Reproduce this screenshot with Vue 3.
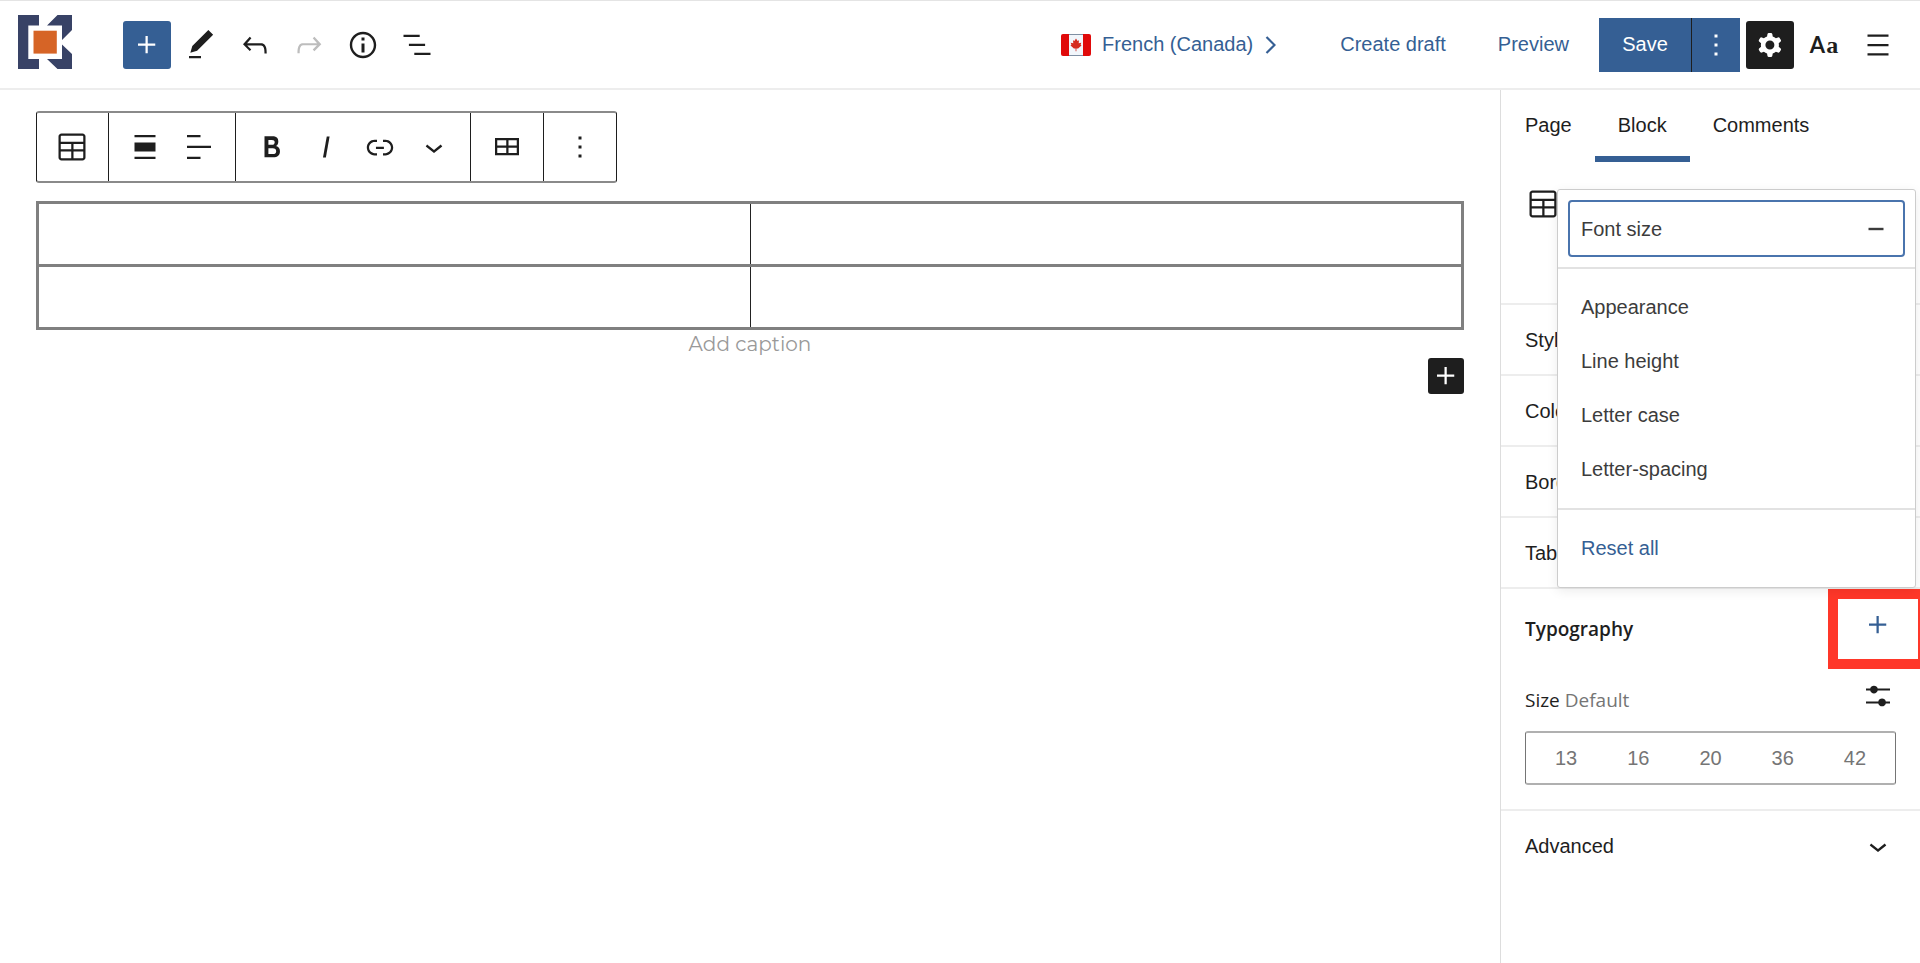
<template>
  <div class="editor">
    <header class="header">
      <div class="header-left">
        <a href="#" class="logo" aria-label="Dashboard">
          <svg width="54" height="54" viewBox="0 0 54 54">
            <path fill="#384266" d="M0 0h21v10.5H10.3V44H21v10H0zM39.5 0H54v15L44 25V10.5H29zM44 29.5l10 9.5v15H39.5L29 44h15z" />
            <path fill="#d66426" d="M15.5 15.7h23.3v22.9H15.5z" />
          </svg>
        </a>
        <button class="icon-btn primary" aria-label="Add block">
          <svg viewBox="0 0 24 24"><path :d="icons.plus" /></svg>
        </button>
        <button
          v-for="tool in headerTools"
          :key="tool.icon"
          class="icon-btn"
          :aria-label="tool.label"
          :disabled="tool.disabled"
        >
          <svg viewBox="0 0 24 24"><path :d="icons[tool.icon]" /></svg>
        </button>
      </div>

      <div class="header-right">
        <a href="#" class="language">
          <svg class="flag" width="30" height="22" viewBox="0 0 30 22">
            <rect width="30" height="22" rx="2" fill="#e00a0a" />
            <path fill="#f2f6fb" d="M8 0h14v22H8z" />
            <path stroke="#7f8fa3" d="M8 .5h14M8 21.5h14" />
            <path fill="#d52b1e" d="M15 4.5l1.6 2.4 1.4-.6-.3 3 2.6-.6-.7 2 .9.8-3.4 2.9h-1.7v2.8h-.8v-2.8h-1.7l-3.4-2.9.9-.8-.7-2 2.6.6-.3-3 1.4.6z" />
          </svg>
          <span>French (Canada)</span>
          <svg class="arrow" width="11" height="18" viewBox="0 0 11 18">
            <path fill="none" stroke="#355f94" stroke-width="2.2" d="M1.5 1l8 8-8 8" />
          </svg>
        </a>
        <button class="text-btn draft">Create draft</button>
        <button class="text-btn preview">Preview</button>
        <div class="save-group">
          <button class="save">Save</button>
          <button class="save-more" aria-label="More save options">
            <svg viewBox="0 0 24 24"><path :d="icons.more" /></svg>
          </button>
        </div>
        <button class="icon-btn dark" aria-label="Settings" @click="showSidebar = !showSidebar">
          <svg viewBox="0 0 24 24"><path fill-rule="evenodd" :d="icons.cog" /></svg>
        </button>
        <button class="icon-btn styles" aria-label="Typography styles"><b>A</b><i>a</i></button>
        <button class="icon-btn" aria-label="Options">
          <svg viewBox="0 0 24 24"><path :d="icons.menu" /></svg>
        </button>
      </div>
    </header>

    <div class="body">
      <main class="canvas">
        <div class="toolbar">
          <div v-for="(group, i) in toolbar" :key="i" class="toolbar-group">
            <button v-for="item in group" :key="item" :aria-label="item">
              <svg viewBox="0 0 24 24"><path :d="icons[item]" /></svg>
            </button>
          </div>
        </div>

        <figure class="table-block">
          <table>
            <tbody>
              <tr v-for="row in 2" :key="row">
                <td v-for="col in 2" :key="col" contenteditable="true"></td>
              </tr>
            </tbody>
          </table>
          <figcaption>Add caption</figcaption>
        </figure>
        <button class="inserter" aria-label="Add block">
          <svg viewBox="0 0 24 24"><path :d="icons.plus" /></svg>
        </button>
      </main>

      <aside v-if="showSidebar" class="sidebar">
        <nav class="tabs">
          <button
            v-for="tab in tabs"
            :key="tab"
            :class="{ 'active': tab === activeTab }"
            @click="activeTab = tab"
          >{{ tab }}</button>
        </nav>

        <div class="block-card">
          <svg viewBox="0 0 24 24"><path :d="icons.table" /></svg>
        </div>

        <button v-for="panel in panels" :key="panel" class="panel-row">{{ panel }}</button>

        <section class="typography">
          <div class="typography-head">
            <h2>Typography</h2>
            <button class="icon-btn add-option" aria-label="Typography options" @click="showMenu = !showMenu">
              <svg viewBox="0 0 24 24"><path :d="icons.plus" /></svg>
            </button>
            <span class="highlight"></span>
          </div>
          <div class="size-head">
            <span>Size <em>Default</em></span>
            <button class="icon-btn" aria-label="Set custom size">
              <svg viewBox="0 0 24 24"><path :d="icons.sliders" /></svg>
            </button>
          </div>
          <div class="sizes">
            <button v-for="size in sizes" :key="size" @click="fontSize = size">{{ size }}</button>
          </div>
        </section>

        <button class="panel-row advanced">
          Advanced
          <svg viewBox="0 0 24 24"><path :d="icons.chevron" /></svg>
        </button>

        <div v-if="showMenu" class="menu">
          <div class="menu-group first">
            <button class="selected">
              Font size
              <svg viewBox="0 0 24 24"><path d="M7 11.2h10v1.6H7z" /></svg>
            </button>
          </div>
          <div class="menu-group">
            <button v-for="option in options" :key="option">{{ option }}</button>
          </div>
          <div class="menu-group">
            <button class="reset">Reset all</button>
          </div>
        </div>
      </aside>
    </div>
  </div>
</template>

<script setup>
import { ref } from 'vue'

const showSidebar = ref(true)
const showMenu = ref(true)
const activeTab = ref('Block')
const fontSize = ref(null)

const tabs = ['Page', 'Block', 'Comments']
const panels = ['Styles', 'Color', 'Border', 'Table']
const options = ['Appearance', 'Line height', 'Letter case', 'Letter-spacing']
const sizes = [13, 16, 20, 36, 42]

const headerTools = [
  { icon: 'edit', label: 'Tools' },
  { icon: 'undo', label: 'Undo' },
  { icon: 'redo', label: 'Redo', disabled: true },
  { icon: 'info', label: 'Details' },
  { icon: 'list', label: 'List view' }
]

const toolbar = [
  ['table'],
  ['align', 'alignText'],
  ['bold', 'italic', 'link', 'chevron'],
  ['editTable'],
  ['more']
]

const icons = {
  plus: 'M11 12.5V17.5H12.5V12.5H17.5V11H12.5V6H11V11H6V12.5H11Z',
  edit: 'M20.1 5.1L16.9 2 6.2 12.7l-1.3 4.4 4.5-1.3L20.1 5.1zM4 20.8h8v-1.5H4v1.5z',
  undo: 'M18.3 11.7c-.6-.6-1.4-.9-2.3-.9H6.7l2.9-3.3-1.1-1-4.5 5L8.5 16l1-1-2.7-2.7H16c.5 0 .9.2 1.3.5 1 1 1 3.4 1 4.5v.3h1.5v-.2c0-1.5 0-4.3-1.5-5.7z',
  redo: 'M15.6 6.5l-1.1 1 2.9 3.3H8c-.9 0-1.7.3-2.3.9-1.4 1.5-1.4 4.2-1.4 5.6v.2h1.5v-.3c0-1.1 0-3.5 1-4.5.3-.3.7-.5 1.3-.5h9.2L14.5 15l1.1 1.1 4.6-4.6-4.6-5z',
  info: 'M12 3.2c-4.8 0-8.8 3.9-8.8 8.8 0 4.8 3.9 8.8 8.8 8.8 4.8 0 8.8-3.9 8.8-8.8 0-4.8-4-8.8-8.8-8.8zm0 16c-4 0-7.2-3.3-7.2-7.2C4.8 8 8 4.8 12 4.8s7.2 3.3 7.2 7.2c0 4-3.2 7.2-7.2 7.2zM11 17h2v-6h-2v6zm0-8h2V7h-2v2z',
  list: 'M13.8 5.2H3v1.5h10.8V5.2zm-3.6 12v1.5H21v-1.5H10.2zm7.2-6H6.6v1.5h10.8v-1.5z',
  more: 'M13 19h-2v-2h2v2zm0-6h-2v-2h2v2zm0-6h-2V5h2v2z',
  menu: 'M5 5v1.5h14V5H5zm0 7.8h14v-1.5H5v1.5zM5 19h14v-1.5H5V19z',
  cog: 'M10.289 4.836A1 1 0 0111.275 4h1.306a1 1 0 01.987.836l.244 1.466c.787.26 1.503.679 2.108 1.218l1.393-.522a1 1 0 011.216.437l.653 1.13a1 1 0 01-.23 1.273l-1.148.944a6.025 6.025 0 010 2.435l1.149.946a1 1 0 01.23 1.272l-.653 1.13a1 1 0 01-1.216.437l-1.394-.522c-.605.54-1.32.958-2.108 1.218l-.244 1.466a1 1 0 01-.987.836h-1.306a1 1 0 01-.986-.836l-.244-1.466a5.995 5.995 0 01-2.108-1.218l-1.394.522a1 1 0 01-1.217-.436l-.653-1.131a1 1 0 01.23-1.272l1.149-.946a6.026 6.026 0 010-2.435l-1.148-.944a1 1 0 01-.23-1.272l.653-1.131a1 1 0 011.217-.437l1.393.522a5.994 5.994 0 012.108-1.218l.244-1.466zM14.929 12a3 3 0 11-6 0 3 3 0 016 0z',
  table: 'M19 3H5c-1.1 0-2 .9-2 2v14c0 1.1.9 2 2 2h14c1.1 0 2-.9 2-2V5c0-1.1-.9-2-2-2zM5 4.5h14c.3 0 .5.2.5.5v3.5h-15V5c0-.3.2-.5.5-.5zm8 5.5h6.5v3.5H13V10zm-1.5 3.5h-7V10h7v3.5zm-7 5.5v-4h7v4.5H5c-.3 0-.5-.2-.5-.5zm14.5.5h-6V15h6.5v4c0 .3-.2.5-.5.5z',
  align: 'M5 4h14v1.5H5zM5 18.5h14V20H5zM5 9h14v6H5z',
  alignText: 'M13 5.5H4V4h9v1.5zm7 7.2H4v-1.5h16v1.5zM13 20H4v-1.5h9V20z',
  bold: 'M14.7 11.3c1-.6 1.5-1.6 1.5-3 0-2.3-1.3-3.4-4-3.4H7v14h5.8c1.4 0 2.5-.3 3.3-1 .8-.7 1.2-1.7 1.2-2.9.1-1.9-.8-3.1-2.6-3.7zm-5.1-4h2.3c.6 0 1.1.1 1.4.4.3.3.5.7.5 1.2s-.2 1-.5 1.2c-.3.3-.8.4-1.4.4H9.6V7.3zm4.6 9c-.4.3-1 .4-1.7.4H9.6v-3.9h2.9c.7 0 1.3.2 1.7.5.4.3.6.8.6 1.5s-.2 1.2-.6 1.5z',
  italic: 'M12.5 5L10 19h1.9l2.5-14z',
  link: 'M15.6 7.2H14v1.5h1.6c2 0 3.7 1.7 3.7 3.7s-1.7 3.7-3.7 3.7H14v1.5h1.6c2.8 0 5.2-2.3 5.2-5.2 0-2.9-2.3-5.2-5.2-5.2zM4.7 12.4c0-2 1.7-3.7 3.7-3.7H10V7.2H8.4c-2.9 0-5.2 2.3-5.2 5.2 0 2.9 2.3 5.2 5.2 5.2H10v-1.5H8.4c-2 0-3.7-1.7-3.7-3.7zm4.6.9h5.3v-1.5H9.3v1.5z',
  chevron: 'M17.5 11.6L12 16l-5.5-4.4.9-1.2L12 14l4.5-3.6 1 1.2z',
  editTable: 'M4 6v11.5h16V6H4zm1.5 1.5h6V11h-6V7.5zm0 8.5v-3.5h6V16h-6zm13 0H13v-3.5h5.5V16zM13 11V7.5h5.5V11H13z',
  sliders: 'M4 7h2.8a2.6 2.6 0 0 1 5 0H20v1.4h-8.2a2.6 2.6 0 0 1-5 0H4zM4 15.6h8.2a2.6 2.6 0 0 1 5 0H20V17h-2.8a2.6 2.6 0 0 1-5 0H4z'
}
</script>

<style>
body {
  margin: 0;
  background: #fff;
}
</style>

<style scoped>
.editor {
  display: flex;
  flex-direction: column;
  min-height: 100vh;
  box-sizing: border-box;
  border-top: 1px solid #e4e4e4;
  font-family: "Liberation Sans", Arial, sans-serif;
  font-size: 20px;
  line-height: 24px;
  color: #1e1e1e;
}
button {
  margin: 0;
  padding: 0;
  border: 0;
  background: none;
  font: inherit;
  color: inherit;
  cursor: pointer;
}
a {
  text-decoration: none;
}
svg {
  display: block;
  flex: none;
  fill: currentColor;
}
svg[viewBox="0 0 24 24"] {
  width: 36px;
  height: 36px;
}

/* header */
.header {
  display: flex;
  justify-content: space-between;
  align-items: center;
  height: 87px;
  padding: 0 18px;
  border-bottom: 2px solid #ededed;
}
.header-left,
.header-right {
  display: flex;
  align-items: center;
  gap: 6px;
}
.logo {
  margin: -6px 45px 0 0;
}
.icon-btn {
  display: flex;
  align-items: center;
  justify-content: center;
  width: 48px;
  height: 48px;
  border-radius: 3px;
}
.icon-btn:disabled {
  color: #bdbdbd;
}
.primary {
  background: #355f94;
  color: #fff;
}
.dark {
  background: #1e1e1e;
  color: #fff;
}
.styles {
  gap: 1px;
}
.styles b {
  font: bold 22px/28px Lato, sans-serif;
}
.styles i {
  font: bold 24px/28px "Liberation Serif", serif;
}
.language {
  display: flex;
  align-items: center;
  color: #355f94;
}
.language span,
.text-btn,
.save {
  padding-bottom: 2px;
}
.flag {
  margin-right: 11px;
}
.arrow {
  margin-left: 12px;
}
.text-btn {
  color: #355f94;
}
.draft {
  margin-left: 58px;
}
.preview {
  margin: 0 24px 0 46px;
}
.save-group {
  display: flex;
  height: 54px;
  background: #355f94;
  color: #fff;
}
.save {
  width: 92px;
}
.save-more {
  display: flex;
  align-items: center;
  justify-content: center;
  width: 49px;
  border-left: 1px solid #1e1e1e;
}

/* canvas */
.body {
  display: flex;
  flex: 1;
}
.canvas {
  flex: 1;
  padding: 21px 36px;
}
.toolbar {
  display: inline-flex;
  height: 72px;
  box-sizing: border-box;
  border: 1px solid #1e1e1e;
  border-width: 2px 1px;
  border-color: #8a8a8a #1e1e1e;
  border-radius: 3px;
}
.toolbar-group {
  display: flex;
  padding: 0 9px;
  border-left: 1px solid #1e1e1e;
}
.toolbar-group:first-child {
  padding-left: 8px;
  border-left: 0;
}
.toolbar-group button {
  display: flex;
  align-items: center;
  justify-content: center;
  width: 54px;
}
.table-block {
  margin: 18px 0 0;
}
.table-block table {
  width: 100%;
  table-layout: fixed;
  border-collapse: collapse;
  border: 3px solid #808080;
}
.table-block td {
  height: 60px;
  padding: 0;
  border: 1px solid #222;
  border-top: 3px solid #808080;
  border-bottom: 3px solid #808080;
}
.table-block td:first-child {
  border-left: 3px solid #808080;
}
.table-block td:last-child {
  border-right: 3px solid #808080;
}
.table-block figcaption {
  font-family: Montserrat, Inter, sans-serif;
  line-height: 28px;
  text-align: center;
  color: #999;
}
.inserter {
  display: block;
  width: 36px;
  height: 36px;
  margin: 0 0 0 auto;
  border-radius: 3px;
  background: #1e1e1e;
  color: #fff;
}

/* sidebar */
.sidebar {
  position: relative;
  flex: none;
  width: 419px;
  border-left: 1px solid #ddd;
  overflow: hidden;
}
.tabs {
  display: flex;
  height: 72px;
}
.tabs button {
  padding: 4px 23px 0;
  border-bottom: 6px solid transparent;
}
.tabs button:first-child {
  padding-left: 24px;
}
.tabs .active {
  border-color: #355f94;
}
.block-card {
  height: 93px;
  padding: 24px;
}
.panel-row {
  display: flex;
  align-items: center;
  justify-content: space-between;
  width: 100%;
  height: 71px;
  padding: 0 24px;
  border-top: 2px solid #ededed;
}
.typography {
  padding: 0 24px 24px;
  border-top: 2px solid #ededed;
}
.typography-head,
.size-head {
  display: flex;
  align-items: center;
  justify-content: space-between;
  height: 71px;
  font-family: "Segoe UI", "Open Sans", sans-serif;
  font-size: 19px;
}
.typography-head {
  position: relative;
}
.typography h2,
.size-head span {
  margin: 0;
  padding-top: 8px;
}
.typography h2 {
  font-size: 19px;
  font-weight: 600;
}
.typography .icon-btn {
  margin-right: -6px;
}
.add-option {
  color: #355f94;
}
.highlight {
  position: absolute;
  top: 0;
  right: -32px;
  width: 80px;
  height: 60px;
  border: 10px solid #ff3729;
  pointer-events: none;
}
.size-head em {
  font-style: normal;
  color: #757575;
}
.sizes {
  display: flex;
  padding: 0 4px;
  border: 1px solid #757575;
  border-width: 2px 1px;
  border-color: #b0b0b0 #757575;
  border-radius: 3px;
}
.sizes button {
  flex: 1;
  height: 50px;
  color: #757575;
}

/* options menu */
.menu {
  position: absolute;
  top: 99px;
  left: 56px;
  right: 4px;
  border: 1px solid #ccc;
  border-radius: 3px;
  background: #fff;
  box-shadow: 0 3px 12px rgba(0, 0, 0, .08);
  color: #3c3c3c;
}
.menu-group {
  padding: 11px 11px 12px;
  border-top: 2px solid #e2e2e2;
}
.menu-group.first {
  padding: 10px;
  border-top: 0;
}
.menu button {
  display: flex;
  align-items: center;
  justify-content: space-between;
  width: 100%;
  height: 54px;
  padding: 0 12px;
}
.menu .selected {
  height: 57px;
  padding: 0 9px 0 11px;
  border: 2px solid #4a74ad;
  border-radius: 4px;
}
.menu .reset {
  color: #355f94;
}
</style>
